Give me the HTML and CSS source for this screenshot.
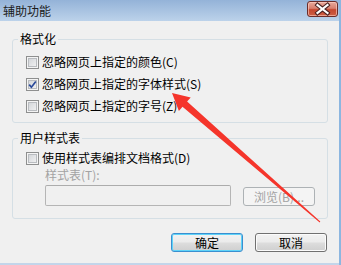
FILE: index.html
```html
<!DOCTYPE html>
<html lang="zh-CN">
<head>
<meta charset="utf-8">
<title>辅助功能</title>
<link rel="stylesheet" href="styles.css">
</head>
<body>
<div class="window">
  <div class="titlebar">
    <span class="title">辅助功能</span>
    <span class="close">
      <svg width="31" height="16" viewBox="0 0 31 16">
        <path d="M10.5 4 L20.5 12 M20.5 4 L10.5 12" stroke="#4a2222" stroke-width="4.2" stroke-linecap="square"/>
        <path d="M10.5 4 L20.5 12 M20.5 4 L10.5 12" stroke="#ffffff" stroke-width="2.2" stroke-linecap="square"/>
      </svg>
    </span>
  </div>
  <div class="content">
    <fieldset class="group">
      <legend>格式化</legend>
      <div class="rows">
        <label class="row"><span class="cb"></span><span>忽略网页上指定的颜色(C)</span></label>
        <label class="row"><span class="cb"><svg width="11" height="11" viewBox="0 0 11 11"><path d="M2.2 5.6 L4.4 8.2 L8.8 2.4" fill="none" stroke="#2a4a9a" stroke-width="1.7"/></svg></span><span>忽略网页上指定的字体样式(S)</span></label>
        <label class="row"><span class="cb"></span><span>忽略网页上指定的字号(Z)</span></label>
      </div>
    </fieldset>
    <fieldset class="group group2">
      <legend>用户样式表</legend>
      <div class="rows2">
        <label class="row row-tight"><span class="cb"></span><span>使用样式表编排文档格式(D)</span></label>
        <div class="sub">
          <div class="sublabel">样式表(T):</div>
          <div class="subinput">
            <span class="input"></span>
            <span class="btn btn-disabled">浏览(B)...</span>
          </div>
        </div>
      </div>
    </fieldset>
    <div class="actions">
      <span class="btn btn-default">确定</span>
      <span class="btn">取消</span>
    </div>
  </div>
</div>
<svg class="arrow" width="341" height="265" viewBox="0 0 341 265">
  <polygon points="172,93 190.7,97.4 187.1,101.6 320.3,221.6 319.7,222.4 182.5,106.8 178.9,111" fill="#f5352b"/>
</svg>
</body>
</html>
```

FILE: styles.css
```css
html, body {
  margin: 0;
  padding: 0;
}
body {
  width: 341px;
  height: 265px;
  overflow: hidden;
  position: relative;
  background: #f0f0f0;
  font-family: "Noto Sans CJK SC", "Liberation Sans", sans-serif;
  font-size: 12px;
  color: #000;
}
.window {
  width: 341px;
  height: 265px;
  box-sizing: border-box;
  border-right: 2px solid #8cb6e0;
  display: flex;
  flex-direction: column;
  background: #c7d9ec;
}
.titlebar {
  height: 21px;
  flex: none;
  box-sizing: border-box;
  padding: 1px 1px 0 3px;
  display: flex;
  justify-content: space-between;
  align-items: flex-start;
  background: linear-gradient(#94b3d8, #bcd2ea);
}
.title {
  line-height: 19px;
  font-size: 12px;
  color: #1b1b1b;
}
.close {
  width: 31px;
  height: 16px;
  box-sizing: border-box;
  border: 1px solid #6b2d2a;
  border-radius: 3px;
  background: linear-gradient(#e9aa9c 0%, #d9806f 45%, #c5472f 55%, #cd5f45 100%);
  box-shadow: inset 0 0 0 1px rgba(255, 210, 200, 0.6);
  display: flex;
  align-items: center;
  justify-content: center;
}
.close svg {
  display: block;
  margin: -1px;
}
.content {
  flex: 1;
  background: #f0f0f0;
  padding: 11px 11px 0 12px;
  border-bottom: 2px solid #c3d5ea;
  display: flex;
  flex-direction: column;
}
.group {
  margin: 0;
  padding: 0;
  min-width: 0;
  border: 1px solid #d5dfe5;
  border-radius: 3px;
}
.group legend {
  margin-left: 5px;
  padding: 0 2px;
  line-height: 14px;
}
.group2 {
  margin-top: 8px;
}
.rows {
  padding: 5px 0 5px 13px;
  display: flex;
  flex-direction: column;
}
.row {
  height: 22px;
  display: flex;
  align-items: center;
  gap: 3px;
  line-height: 14px;
}
.row-tight {
  height: 20px;
}
.cb {
  width: 13px;
  height: 13px;
  box-sizing: border-box;
  border: 1px solid #8e8f8f;
  background: linear-gradient(135deg, #cdd0d4, #f6f6f6);
  box-shadow: inset 0 0 0 1px #f4f4f4, inset 0 0 0 2px #b9bcc0;
  flex: none;
  display: flex;
  align-items: center;
  justify-content: center;
}
.cb svg {
  display: block;
}
.rows2 {
  padding: 3px 0 12px 13px;
  display: flex;
  flex-direction: column;
}
.sub {
  padding-left: 19px;
  display: flex;
  flex-direction: column;
}
.sublabel {
  line-height: 14px;
  color: #a3a3a3;
}
.subinput {
  margin-top: 3px;
  display: flex;
  align-items: flex-end;
  gap: 12px;
}
.input {
  width: 186px;
  height: 21px;
  box-sizing: border-box;
  border: 1px solid #b5b5b5;
  border-top-color: #acacac;
  border-radius: 2px;
  background: #f0f0f0;
}
.btn {
  width: 72px;
  height: 19px;
  box-sizing: border-box;
  border: 1px solid #707070;
  border-radius: 3px;
  background: linear-gradient(#f2f2f2 0%, #ebebeb 48%, #dddddd 52%, #cfcfcf 100%);
  box-shadow: inset 0 0 0 1px #fbfbfb;
  display: flex;
  align-items: center;
  justify-content: center;
  line-height: 14px;
}
.btn-disabled {
  border-color: #adb2b5;
  background: #f4f4f4;
  box-shadow: none;
  color: #a3a3a3;
}
.btn-default {
  border-color: #3a8fd0;
  box-shadow: inset 0 0 0 1px #5fd3f8;
}
.actions {
  margin-top: 14px;
  padding-right: 1px;
  display: flex;
  justify-content: flex-end;
  gap: 12px;
}
.arrow {
  position: absolute;
  left: 0;
  top: 0;
  pointer-events: none;
}
```
